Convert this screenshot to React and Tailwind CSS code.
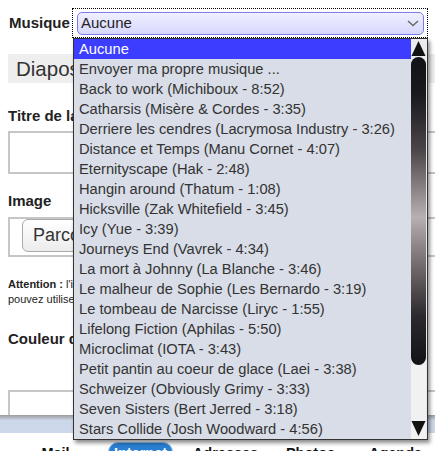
import React from 'react';

// Songs shown in the open "Musique" dropdown
const songs = [
  'Aucune',
  'Envoyer ma propre musique ...',
  'Back to work (Michiboux - 8:52)',
  'Catharsis (Misère & Cordes - 3:35)',
  'Derriere les cendres (Lacrymosa Industry - 3:26)',
  'Distance et Temps (Manu Cornet - 4:07)',
  'Eternityscape (Hak - 2:48)',
  'Hangin around (Thatum - 1:08)',
  'Hicksville (Zak Whitefield - 3:45)',
  'Icy (Yue - 3:39)',
  'Journeys End (Vavrek - 4:34)',
  'La mort à Johnny (La Blanche - 3:46)',
  'Le malheur de Sophie (Les Bernardo - 3:19)',
  'Le tombeau de Narcisse (Liryc - 1:55)',
  'Lifelong Fiction (Aphilas - 5:50)',
  'Microclimat (IOTA - 3:43)',
  'Petit pantin au coeur de glace (Laei - 3:38)',
  'Schweizer (Obviously Grimy - 3:33)',
  'Seven Sisters (Bert Jerred - 3:18)',
  'Stars Collide (Josh Woodward - 4:56)',
];

const tabs = ['Mail', 'Internet', 'Adresses', 'Photos', 'Agenda'];

function Triangle({ up }) {
  return (
    <svg width="15" height="17" viewBox="0 0 15 17">
      {up ? <polygon points="7.5,1 14.5,16 0.5,16" fill="#111" /> : <polygon points="0.5,1 14.5,1 7.5,16" fill="#111" />}
    </svg>
  );
}

export default function App() {
  return (
    <div className="relative w-[435px] h-[451px] overflow-hidden bg-white font-['Liberation_Sans',Arial,sans-serif] text-[#222]">
      {/* page behind the dropdown */}
      <div className="pl-[8px]">
        {/* music select row */}
        <div className="flex pt-[8px]">
          <div className="w-[64px] pl-[1px] pt-[6px] text-[15px] font-bold leading-[18px] text-[#222]">Musique</div>
          <div className="h-[30px] w-[356px] border border-dotted border-black pt-[3px] pl-[4px]">
            <div className="flex h-[23px] w-[347px] items-center justify-between rounded-[5px] border border-[#7b7bec] bg-gradient-to-b from-[#f0f0ff] to-[#d7d7fd] pl-[3px] pr-[3px] text-[15px] text-[#222]">
              <span>Aucune</span>
              <svg width="12" height="7" viewBox="0 0 12 7" className="mr-[1px]">
                <polyline points="1,1 6,5.5 11,1" fill="none" stroke="#666" strokeWidth="1.4" />
              </svg>
            </div>
          </div>
        </div>

        {/* section heading */}
        <div className="mt-[16px] h-[29px] w-[440px] bg-[#eeeeee] pl-[8px] text-[20.5px] leading-[29px] text-[#333]">Diapositives</div>

        <div className="mt-[24px] text-[15px] font-bold leading-[18px]">Titre de la diapositive</div>
        <div className="mt-[6px] h-[43px] w-[460px] border-2 border-[#c6c6c6]" />

        <div className="mt-[18px] text-[15px] font-bold leading-[18px]">Image</div>
        <div className="mt-[7px] h-[40px] w-[460px] border-2 border-[#c6c6c6] pl-[12px]">
          <div className="flex h-[33px] w-[130px] items-center rounded-[6px] border border-[#aaaaaa] bg-gradient-to-b from-white to-[#ececec] pl-[10px] text-[18px] text-[#333]">
            Parcourir...
          </div>
        </div>

        <div className="mt-[20px] text-[11px] leading-[15px] text-[#222]">
          <div className="whitespace-nowrap">
            <span className="font-bold">Attention :</span> l'image doit être au format JPG ou PNG, et vous ne
          </div>
          <div className="whitespace-nowrap">pouvez utiliser que des images dont vous possédez les droits.</div>
        </div>

        <div className="mt-[23px] text-[15px] font-bold leading-[18px]">Couleur de fond</div>
        <div className="mt-[42px] h-[60px] w-[460px] border-2 border-[#c6c6c6]" />
      </div>

      {/* bottom navigation bar */}
      <div className="absolute bottom-0 left-0 h-[36px] w-full bg-white">
        <div className="h-[18px] bg-gradient-to-b from-[#9c9c9c] via-[#ccd7e9] via-30% to-[#cdd8ea]" />
        <div className="ml-[13px] grid w-[425px] grid-cols-5 pt-[9px] text-center text-[14.5px] font-bold leading-[16px] text-[#111]">
          {tabs.map((t) =>
            t === 'Internet' ? (
              <div key={t}>
                <span className="inline-block rounded-full border border-[#8cc0f0] bg-[#2b7fd2] px-[5px] pt-[2px] text-white">{t}</span>
              </div>
            ) : (
              <div key={t} className="pt-[3px]">{t}</div>
            )
          )}
        </div>
      </div>

      {/* open dropdown list */}
      <div className="absolute left-[73px] top-[38px] flex h-[402px] w-[355px] border border-[#333] bg-[#d8dde7] shadow-[2px_3px_4px_rgba(0,0,0,0.45)]">
        <div className="flex-1">
          {songs.map((s, i) => (
            <div
              key={s}
              className={
                i === 0
                  ? 'h-[20px] whitespace-nowrap bg-[#3d3dff] pl-[5px] text-[14.7px] leading-[20px] text-white'
                  : 'h-[20px] whitespace-nowrap pl-[5px] text-[14.7px] leading-[20px] text-[#333]'
              }
            >
              {s}
            </div>
          ))}
        </div>
        {/* scrollbar */}
        <div className="flex w-[16px] flex-col bg-[#e9ebef] pr-[1px]">
          <div className="h-[18px] pt-[1px]">
            <Triangle up />
          </div>
          <div className="h-[308px] rounded-full bg-[linear-gradient(to_bottom,#131217_0%,#1a191e_12%,#4a4548_30%,#b8b0b0_52%,#7a7272_66%,#2c2a2e_84%,#121116_100%)]" />
          <div className="flex-1 bg-[#f1f1f1]" />
          <div className="h-[20px] bg-[#f1f1f1] pt-[1px]">
            <Triangle />
          </div>
        </div>
      </div>
    </div>
  );
}
